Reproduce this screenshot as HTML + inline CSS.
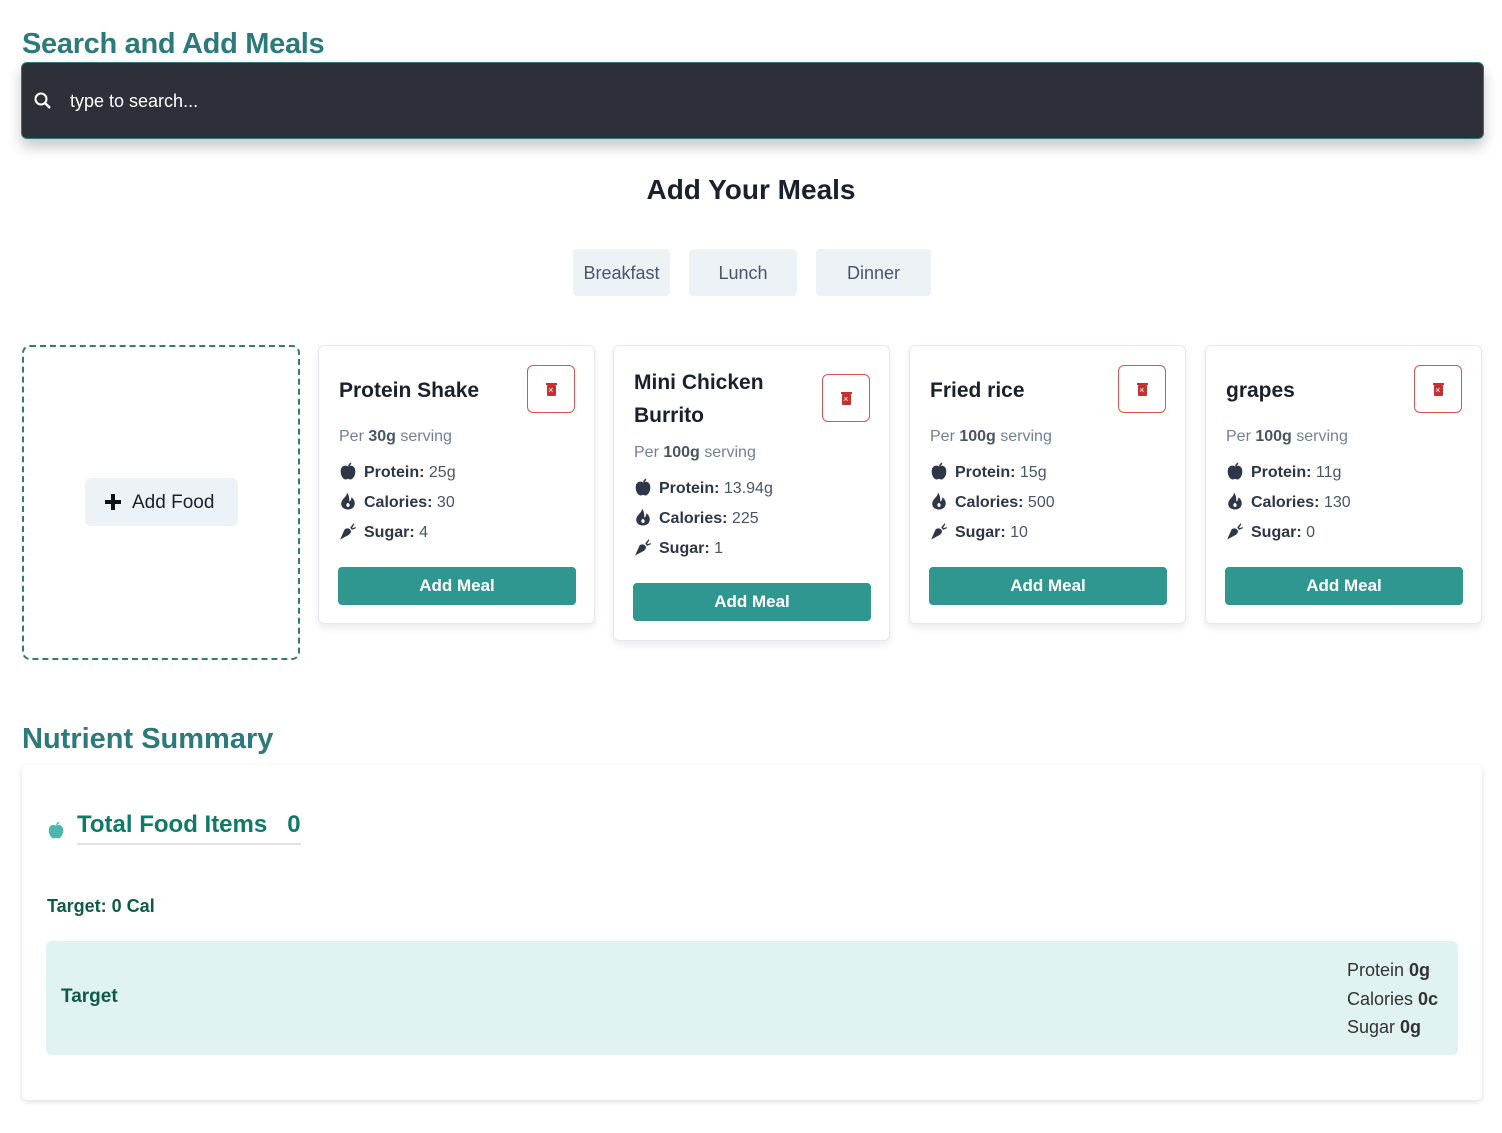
<!DOCTYPE html>
<html><head><meta charset="utf-8"><style>
*{box-sizing:border-box;margin:0;padding:0}
body{width:1502px;height:1133px;background:#fff;font-family:"Liberation Sans",sans-serif;position:relative;overflow:hidden;color:#1a202c}
.abs{position:absolute}
h1{position:absolute;left:22px;top:26px;font-size:29px;font-weight:bold;color:#2c7a7b;letter-spacing:-0.3px;line-height:36px}
.search{left:21px;top:62px;width:1463px;height:77px;background:#2d3039;border:1px solid #2c7a7b;border-radius:6px;box-shadow:0 8px 14px rgba(0,0,0,0.22)}
.search span{position:absolute;left:48px;top:28px;color:#fff;font-size:18px}
.t2{left:0;width:1502px;top:174px;text-align:center;font-size:28px;font-weight:bold;color:#1a202c}
.tab{top:249px;height:47px;background:#edf2f7;border-radius:4px;font-size:18px;color:#4a5568;text-align:center;line-height:48px}
.addf{left:22px;top:345px;width:278px;height:315px;border:2px dashed #2f7f6b;border-radius:8px}
.addbtn{left:85px;top:478px;width:153px;height:48px;background:#edf2f7;border-radius:6px;font-size:19px;color:#1a202c;line-height:50px;padding-left:47px}
.card{width:277px;background:#fff;border:1px solid #e6e8ee;border-radius:6px;box-shadow:0 4px 8px rgba(0,0,0,0.08);top:345px}
.card .ttl{position:absolute;left:20px;font-size:21px;font-weight:bold;color:#1a202c;line-height:33px;width:170px}
.card .del{position:absolute;right:19px;width:48px;height:48px;border:1.5px solid #d9534f;border-radius:6px}
.card .del i{position:absolute;left:19px;top:19px;width:9px;height:11px;background:#c53030;border-radius:1px}
.card .del i:before{content:"";position:absolute;left:-1px;top:-2px;width:11px;height:2px;background:#c53030}
.card .del i:after{content:"×";position:absolute;left:1px;top:-1px;color:#fff;font-size:9px;line-height:12px}
.card .per{position:absolute;left:20px;font-size:16px;color:#718096}
.card .per b{color:#4a5568}
.card .row{position:absolute;left:20px;font-size:16px;color:#4a5568}
.card .row b{color:#2d3748;margin-left:7px}
.card .ic{display:inline-block;width:18px;height:18px;vertical-align:-3px;}
.card .btn{position:absolute;left:19px;width:238px;height:38px;background:#2f9690;border-radius:4px;color:#fff;font-weight:bold;font-size:17px;text-align:center;line-height:38px}
.ns{left:22px;top:723px;font-size:29px;font-weight:bold;color:#2c7a7b}
.sum{left:22px;top:765px;width:1460px;height:335px;background:#fff;border-radius:6px;box-shadow:0 2px 6px rgba(0,0,0,0.12)}
</style></head><body>
<h1>Search and Add Meals</h1>
<div class="abs search">
<svg class="abs" style="left:11px;top:28px" width="20" height="20" viewBox="0 0 20 20"><circle cx="8" cy="8" r="5.5" fill="none" stroke="#fff" stroke-width="2"/><line x1="12" y1="12" x2="17" y2="17" stroke="#fff" stroke-width="2.4"/></svg>
<span>type to search...</span></div>
<div class="abs t2">Add Your Meals</div>
<div class="abs tab" style="left:573px;width:97px">Breakfast</div>
<div class="abs tab" style="left:689px;width:108px">Lunch</div>
<div class="abs tab" style="left:816px;width:115px">Dinner</div>
<div class="abs addf"></div>
<div class="abs addbtn"><svg class="abs" style="left:20px;top:16px" width="16" height="16"><rect x="6" y="0" width="4" height="16" fill="#111"/><rect x="0" y="6" width="16" height="4" fill="#111"/></svg>Add Food</div>

<div class="abs card" style="left:318px;height:279px">
<div class="ttl" style="top:28px">Protein Shake</div><div class="del" style="top:19px"><i></i></div>
<div class="per" style="top:82px">Per <b>30g</b> serving</div>
<div class="row" style="top:116px"><svg class="ic" viewBox="0 0 16 16"><path d="M8 4C6 2.5 1.5 3 1.5 8.5 1.5 12.5 4 15.5 6 15.5 7 15.5 7.3 15 8 15 8.7 15 9 15.5 10 15.5 12 15.5 14.5 12.5 14.5 8.5 14.5 3 10 2.5 8 4Z M8 3.5C8.5 1.5 10 0.5 11 0.5 11 2 9.5 3.5 8 3.5Z" fill="#2d3748"/></svg><b>Protein:</b> 25g</div>
<div class="row" style="top:146px"><svg class="ic" viewBox="0 0 16 16"><path d="M7 0.5C7.5 4 2 6 2 10.5 2 13.5 4.5 15.5 8 15.5 11.5 15.5 14 13.5 14 10 14 7 12 5.5 11 4.5 11 7 10 8 9 8.5 9.5 5 8.5 2 7 0.5Z M8 9.5C9.5 10.5 10 12 9 13 8 13.8 6.5 13 6.5 11.5 6.5 10.5 7.3 10 8 9.5Z" fill="#2d3748" fill-rule="evenodd"/></svg><b>Calories:</b> 30</div>
<div class="row" style="top:176px"><svg class="ic" viewBox="0 0 16 16"><path d="M1 15.5 5 6.5C7 5 9.5 5.5 10.5 7.5 11 9 10 10.5 8.5 11.5Z M10 5 13 1 13.5 2 11.5 5.5 15 4.5 15 5.5 11.5 7Z" fill="#2d3748"/></svg><b>Sugar:</b> 4</div>
<div class="btn" style="top:221px">Add Meal</div></div>

<div class="abs card" style="left:613px;height:296px">
<div class="ttl" style="top:20px">Mini Chicken Burrito</div><div class="del" style="top:28px"><i></i></div>
<div class="per" style="top:98px">Per <b>100g</b> serving</div>
<div class="row" style="top:132px"><svg class="ic" viewBox="0 0 16 16"><path d="M8 4C6 2.5 1.5 3 1.5 8.5 1.5 12.5 4 15.5 6 15.5 7 15.5 7.3 15 8 15 8.7 15 9 15.5 10 15.5 12 15.5 14.5 12.5 14.5 8.5 14.5 3 10 2.5 8 4Z M8 3.5C8.5 1.5 10 0.5 11 0.5 11 2 9.5 3.5 8 3.5Z" fill="#2d3748"/></svg><b>Protein:</b> 13.94g</div>
<div class="row" style="top:162px"><svg class="ic" viewBox="0 0 16 16"><path d="M7 0.5C7.5 4 2 6 2 10.5 2 13.5 4.5 15.5 8 15.5 11.5 15.5 14 13.5 14 10 14 7 12 5.5 11 4.5 11 7 10 8 9 8.5 9.5 5 8.5 2 7 0.5Z M8 9.5C9.5 10.5 10 12 9 13 8 13.8 6.5 13 6.5 11.5 6.5 10.5 7.3 10 8 9.5Z" fill="#2d3748" fill-rule="evenodd"/></svg><b>Calories:</b> 225</div>
<div class="row" style="top:192px"><svg class="ic" viewBox="0 0 16 16"><path d="M1 15.5 5 6.5C7 5 9.5 5.5 10.5 7.5 11 9 10 10.5 8.5 11.5Z M10 5 13 1 13.5 2 11.5 5.5 15 4.5 15 5.5 11.5 7Z" fill="#2d3748"/></svg><b>Sugar:</b> 1</div>
<div class="btn" style="top:237px">Add Meal</div></div>

<div class="abs card" style="left:909px;height:279px">
<div class="ttl" style="top:28px">Fried rice</div><div class="del" style="top:19px"><i></i></div>
<div class="per" style="top:82px">Per <b>100g</b> serving</div>
<div class="row" style="top:116px"><svg class="ic" viewBox="0 0 16 16"><path d="M8 4C6 2.5 1.5 3 1.5 8.5 1.5 12.5 4 15.5 6 15.5 7 15.5 7.3 15 8 15 8.7 15 9 15.5 10 15.5 12 15.5 14.5 12.5 14.5 8.5 14.5 3 10 2.5 8 4Z M8 3.5C8.5 1.5 10 0.5 11 0.5 11 2 9.5 3.5 8 3.5Z" fill="#2d3748"/></svg><b>Protein:</b> 15g</div>
<div class="row" style="top:146px"><svg class="ic" viewBox="0 0 16 16"><path d="M7 0.5C7.5 4 2 6 2 10.5 2 13.5 4.5 15.5 8 15.5 11.5 15.5 14 13.5 14 10 14 7 12 5.5 11 4.5 11 7 10 8 9 8.5 9.5 5 8.5 2 7 0.5Z M8 9.5C9.5 10.5 10 12 9 13 8 13.8 6.5 13 6.5 11.5 6.5 10.5 7.3 10 8 9.5Z" fill="#2d3748" fill-rule="evenodd"/></svg><b>Calories:</b> 500</div>
<div class="row" style="top:176px"><svg class="ic" viewBox="0 0 16 16"><path d="M1 15.5 5 6.5C7 5 9.5 5.5 10.5 7.5 11 9 10 10.5 8.5 11.5Z M10 5 13 1 13.5 2 11.5 5.5 15 4.5 15 5.5 11.5 7Z" fill="#2d3748"/></svg><b>Sugar:</b> 10</div>
<div class="btn" style="top:221px">Add Meal</div></div>

<div class="abs card" style="left:1205px;height:279px">
<div class="ttl" style="top:28px">grapes</div><div class="del" style="top:19px"><i></i></div>
<div class="per" style="top:82px">Per <b>100g</b> serving</div>
<div class="row" style="top:116px"><svg class="ic" viewBox="0 0 16 16"><path d="M8 4C6 2.5 1.5 3 1.5 8.5 1.5 12.5 4 15.5 6 15.5 7 15.5 7.3 15 8 15 8.7 15 9 15.5 10 15.5 12 15.5 14.5 12.5 14.5 8.5 14.5 3 10 2.5 8 4Z M8 3.5C8.5 1.5 10 0.5 11 0.5 11 2 9.5 3.5 8 3.5Z" fill="#2d3748"/></svg><b>Protein:</b> 11g</div>
<div class="row" style="top:146px"><svg class="ic" viewBox="0 0 16 16"><path d="M7 0.5C7.5 4 2 6 2 10.5 2 13.5 4.5 15.5 8 15.5 11.5 15.5 14 13.5 14 10 14 7 12 5.5 11 4.5 11 7 10 8 9 8.5 9.5 5 8.5 2 7 0.5Z M8 9.5C9.5 10.5 10 12 9 13 8 13.8 6.5 13 6.5 11.5 6.5 10.5 7.3 10 8 9.5Z" fill="#2d3748" fill-rule="evenodd"/></svg><b>Calories:</b> 130</div>
<div class="row" style="top:176px"><svg class="ic" viewBox="0 0 16 16"><path d="M1 15.5 5 6.5C7 5 9.5 5.5 10.5 7.5 11 9 10 10.5 8.5 11.5Z M10 5 13 1 13.5 2 11.5 5.5 15 4.5 15 5.5 11.5 7Z" fill="#2d3748"/></svg><b>Sugar:</b> 0</div>
<div class="btn" style="top:221px">Add Meal</div></div>

<div class="abs ns">Nutrient Summary</div>
<div class="abs sum">
<svg class="abs" style="left:25px;top:54px" width="18" height="20" viewBox="0 0 16 18"><path d="M8 6C6 4.5 1.5 5 1.5 10.5 1.5 14.5 4 17.5 6 17.5 7 17.5 7.3 17 8 17 8.7 17 9 17.5 10 17.5 12 17.5 14.5 14.5 14.5 10.5 14.5 5 10 4.5 8 6Z M8 5.5C8.5 3.5 10 2.5 11 2.5 11 4 9.5 5.5 8 5.5Z" fill="#4db6ac"/></svg>
<div class="abs" style="left:55px;top:46px;font-size:24px;font-weight:bold;color:#0f7a68;padding-bottom:4px;border-bottom:2px solid #e2e2e2;white-space:pre">Total Food Items   0</div>
<div class="abs" style="left:25px;top:131px;font-size:18px;font-weight:bold;color:#0f5a4a">Target: 0 Cal</div>
<div class="abs" style="left:24px;top:176px;width:1412px;height:114px;background:#e0f2f1;border-radius:6px">
<div class="abs" style="left:15px;top:45px;font-size:19px;font-weight:bold;color:#0f5a4a">Target</div>
<div class="abs" style="left:1301px;top:15px;font-size:18px;color:#333;line-height:28.5px">Protein <b>0g</b><br>Calories <b>0c</b><br>Sugar <b>0g</b></div>
</div></div>
</body></html>
